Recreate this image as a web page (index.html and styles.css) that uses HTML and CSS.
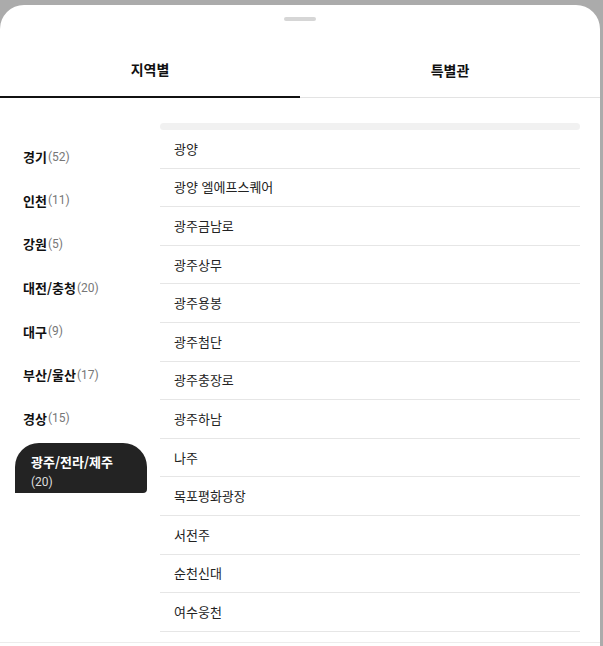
FILE: index.html
```html
<!DOCTYPE html>
<html lang="ko">
<head>
<meta charset="utf-8">
<link rel="stylesheet" href="styles.css">
</head>
<body>
<div class="sheet">
  <div class="handle"></div>
  <div class="tabs">
    <div class="tab active">지역별</div>
    <div class="tab">특별관</div>
  </div>
  <div class="content">
    <ul class="regions">
      <li class="region"><b>경기</b><span class="cnt">(52)</span></li>
      <li class="region"><b>인천</b><span class="cnt">(11)</span></li>
      <li class="region"><b>강원</b><span class="cnt">(5)</span></li>
      <li class="region"><b>대전/충청</b><span class="cnt">(20)</span></li>
      <li class="region"><b>대구</b><span class="cnt">(9)</span></li>
      <li class="region"><b>부산/울산</b><span class="cnt">(17)</span></li>
      <li class="region"><b>경상</b><span class="cnt">(15)</span></li>
      <li class="region selected"><b>광주/전라/제주</b><span class="cnt">(20)</span></li>
    </ul>
    <div class="list">
      <div class="list-top"></div>
      <ul class="theaters">
        <li>광양</li>
        <li>광양 엘에프스퀘어</li>
        <li>광주금남로</li>
        <li>광주상무</li>
        <li>광주용봉</li>
        <li>광주첨단</li>
        <li>광주충장로</li>
        <li>광주하남</li>
        <li>나주</li>
        <li>목포평화광장</li>
        <li>서전주</li>
        <li>순천신대</li>
        <li>여수웅천</li>
      </ul>
    </div>
  </div>
  <div class="footer-line"></div>
</div>
</body>
</html>
```
FILE: styles.css
```css
* { box-sizing: border-box; }
html, body { margin: 0; padding: 0; }
body {
  background: #ababab;
  width: 603px;
  height: 646px;
  overflow: hidden;
  font-family: "Noto Sans CJK KR", "Noto Sans", sans-serif;
  color: #111;
}
.sheet {
  margin-top: 5px;
  width: 600px;
  height: 641px;
  background: #fff;
  border-radius: 24px 24px 0 0;
  overflow: hidden;
  display: flex;
  flex-direction: column;
}
.handle {
  width: 32px;
  height: 4px;
  border-radius: 2px;
  background: #d6d6d6;
  margin: 12px auto 0;
  flex: none;
}
.tabs {
  display: flex;
  margin-top: 21px;
  height: 56px;
  flex: none;
}
.tab {
  flex: 1;
  display: flex;
  align-items: center;
  justify-content: center;
  font-size: 14px;
  font-weight: 700;
  color: #111;
  border-bottom: 1px solid #e3e3e3;
  padding-bottom: 0;
}
.tab.active { border-bottom: 2px solid #111; }
.content {
  display: flex;
  flex: 1;
  min-height: 0;
}
.regions {
  list-style: none;
  margin: 0;
  padding: 37px 0 0 15px;
  width: 160px;
  flex: none;
}
.region {
  height: 43.6px;
  display: flex;
  align-items: center;
  padding-left: 8px;
  font-size: 13px;
}
.region b { font-weight: 700; color: #111; }
.cnt { font-size: 12px; color: #777; margin-left: 1px; font-family: Roboto, "Noto Sans CJK KR", sans-serif; }
.region.selected {
  display: block;
  margin-top: 3px;
  width: 132px;
  height: 50px;
  background: #232323;
  border-radius: 24px 24px 4px 0;
  padding: 8px 0 0 16px;
  line-height: 21px;
}
.region.selected b { color: #fff; display: block; }
.region.selected .cnt { color: #ddd; display: block; margin-left: 0; }
.list {
  flex: 1;
  padding-right: 20px;
  padding-top: 25px;
}
.list-top {
  height: 7px;
  background: #f1f1f1;
  border-radius: 4px;
}
.theaters {
  list-style: none;
  margin: 0;
  padding: 0;
}
.theaters li {
  height: 38.6px;
  display: flex;
  align-items: center;
  padding-left: 14px;
  padding-bottom: 1px;
  font-size: 13px;
  color: #222;
  border-bottom: 1px solid #e6e6e6;
}
.footer-line {
  flex: none;
  height: 4px;
  border-top: 1px solid #ececec;
}
```
